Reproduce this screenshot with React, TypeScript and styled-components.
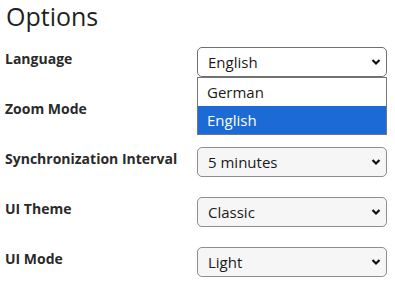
import React from "react";
import styled, { createGlobalStyle } from "styled-components";

const Global = createGlobalStyle`
  html, body { margin: 0; padding: 0; background: #fff; }
  body { font-family: "Open Sans", "Noto Sans", sans-serif; color: #222; }
`;

const Page = styled.div`
  padding: 0 9px 0 5px;
`;

const Title = styled.h1`
  margin: 0 0 15px 1px;
  font-size: 25px;
  font-weight: 400;
  line-height: 32px;
  color: #1f1f1f;
`;

const Form = styled.div`
  display: grid;
  grid-template-columns: 192px 190px;
  grid-auto-rows: 30px;
  row-gap: 20px;
`;

const Label = styled.div`
  padding-top: 1px;
  font-size: 14px;
  font-weight: 700;
  line-height: 21px;
  color: #2a2a2a;
  white-space: nowrap;
`;

const SelectWrap = styled.div`
  position: relative;
`;

const SelectBox = styled.div<{ $open?: boolean }>`
  box-sizing: border-box;
  height: 30px;
  display: flex;
  align-items: center;
  justify-content: space-between;
  padding: 0 5px 0 10px;
  border: 1px solid ${(p) => (p.$open ? "#6f6f6f" : "#8d8d8d")};
  border-radius: 5px;
  background: ${(p) => (p.$open ? "#ffffff" : "#f6f6f6")};
  font-size: 15px;
  color: #1a1a1a;
`;

const Menu = styled.div`
  position: absolute;
  top: 30px;
  left: 0;
  right: 0;
  box-sizing: border-box;
  border: 1px solid #767676;
  background: #fff;
  z-index: 2;
`;

const Option = styled.div<{ $active?: boolean }>`
  height: 28px;
  display: flex;
  align-items: center;
  padding-left: 9px;
  font-size: 15px;
  background: ${(p) => (p.$active ? "#1b6ad6" : "#fff")};
  color: ${(p) => (p.$active ? "#fff" : "#1a1a1a")};
`;

const Chevron = () => (
  <svg width="10" height="8" viewBox="0 0 10 8">
    <path d="M1.5 2 L5 5.5 L8.5 2" fill="none" stroke="#111" strokeWidth="2.2" />
  </svg>
);

type Field = { label: string; value: string; open?: boolean; options?: string[] };

const fields: Field[] = [
  { label: "Language", value: "English", open: true, options: ["German", "English"] },
  { label: "Zoom Mode", value: "" },
  { label: "Synchronization Interval", value: "5 minutes" },
  { label: "UI Theme", value: "Classic" },
  { label: "UI Mode", value: "Light" },
];

export default function App() {
  return (
    <>
      <Global />
      <Page>
        <Title>Options</Title>
        <Form>
          {fields.map((f) => (
            <React.Fragment key={f.label}>
              <Label>{f.label}</Label>
              <SelectWrap>
                <SelectBox $open={f.open}>
                  <span>{f.value}</span>
                  <Chevron />
                </SelectBox>
                {f.open && f.options && (
                  <Menu>
                    {f.options.map((o) => (
                      <Option key={o} $active={o === f.value}>
                        {o}
                      </Option>
                    ))}
                  </Menu>
                )}
              </SelectWrap>
            </React.Fragment>
          ))}
        </Form>
      </Page>
    </>
  );
}
